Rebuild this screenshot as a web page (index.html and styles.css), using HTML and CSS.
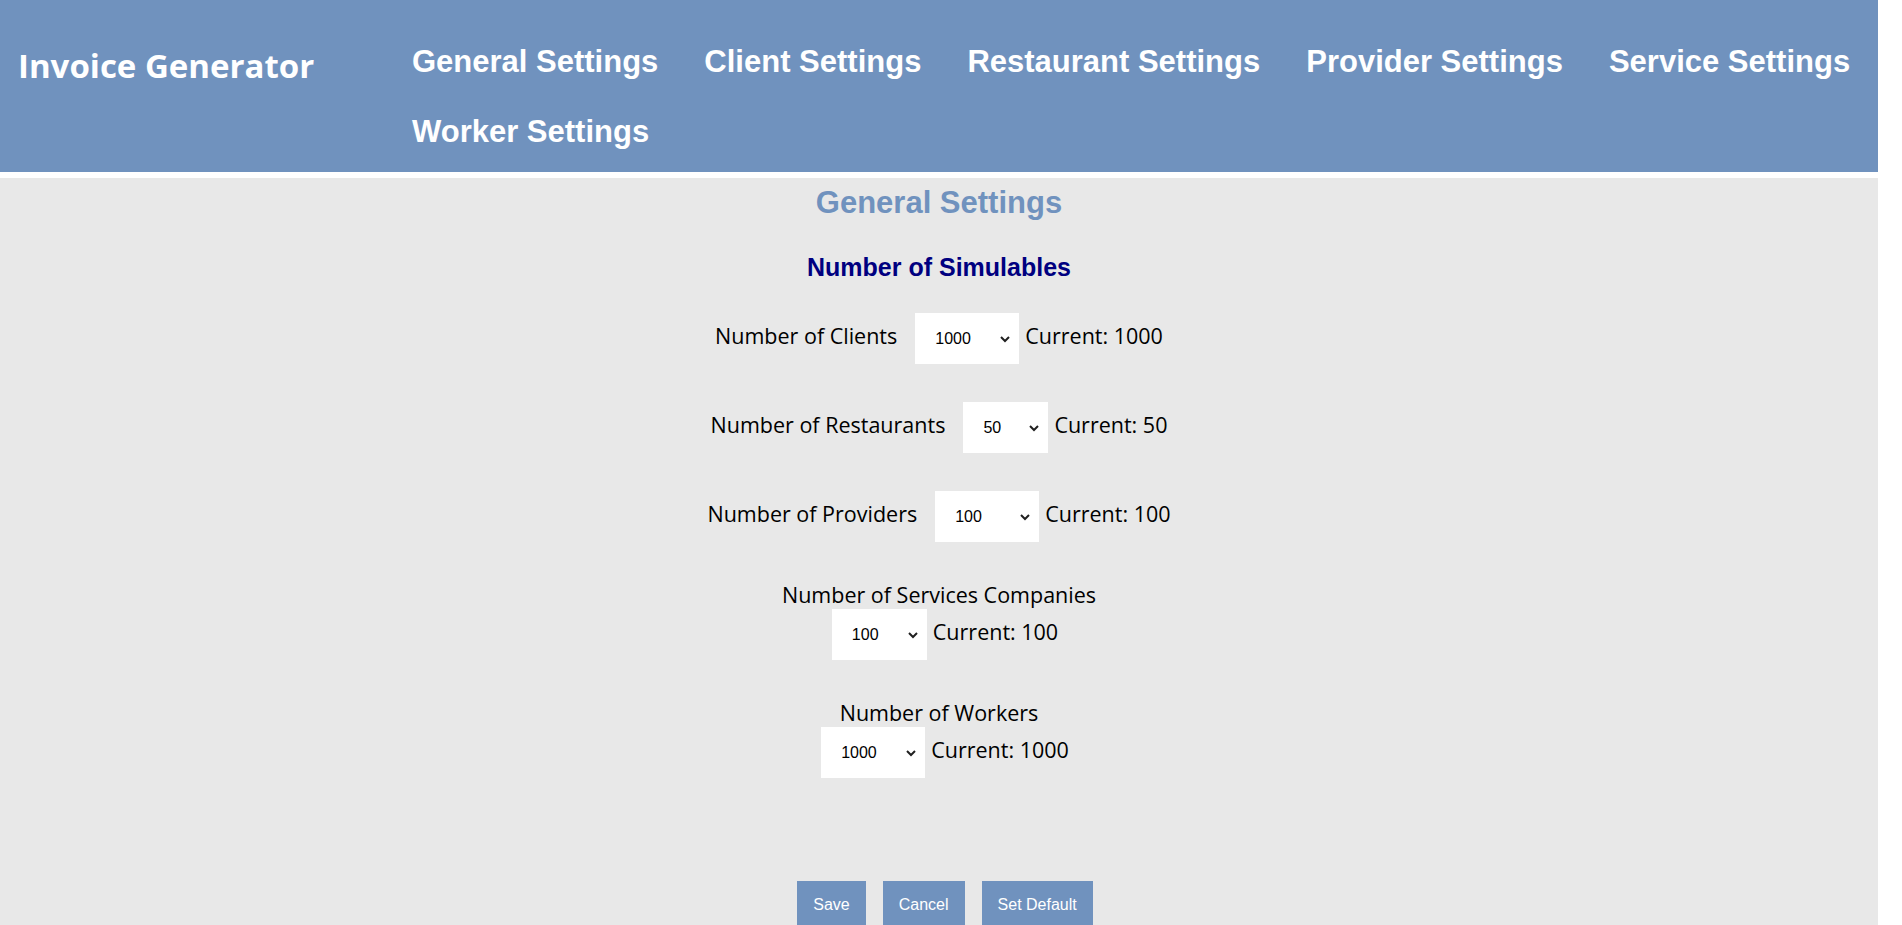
FILE: index.html
```html
<!DOCTYPE html>
<html lang="en">
<head>
<meta charset="utf-8">
<title>Invoice Generator</title>
<link rel="stylesheet" href="styles.css">
</head>
<body>
<header class="topbar">
  <div class="brand">Invoice Generator</div>
  <nav class="nav">
    <a class="nav-link" href="#">General Settings</a>
    <a class="nav-link" href="#">Client Settings</a>
    <a class="nav-link" href="#">Restaurant Settings</a>
    <a class="nav-link" href="#">Provider Settings</a>
    <a class="nav-link" href="#">Service Settings</a>
    <a class="nav-link" href="#">Worker Settings</a>
  </nav>
</header>
<main class="page">
  <h2 class="page-title">General Settings</h2>
  <h3 class="section-title">Number of Simulables</h3>
  <div class="fields">
    <div class="field">
      <label class="field-label" for="clients">Number of Clients</label>
      <span class="select-wrap">
        <select id="clients" class="field-select select-wide">
          <option>100</option><option>500</option><option selected>1000</option><option>5000</option>
        </select>
        <svg class="select-arrow" viewBox="0 0 10 6" aria-hidden="true"><path d="M1 1l4 4 4-4"/></svg>
      </span>
      <span class="field-current">Current: 1000</span>
    </div>
    <div class="field">
      <label class="field-label" for="restaurants">Number of Restaurants</label>
      <span class="select-wrap">
        <select id="restaurants" class="field-select select-narrow">
          <option>10</option><option>20</option><option selected>50</option>
        </select>
        <svg class="select-arrow" viewBox="0 0 10 6" aria-hidden="true"><path d="M1 1l4 4 4-4"/></svg>
      </span>
      <span class="field-current">Current: 50</span>
    </div>
    <div class="field">
      <label class="field-label" for="providers">Number of Providers</label>
      <span class="select-wrap">
        <select id="providers" class="field-select select-wide">
          <option>10</option><option>50</option><option selected>100</option><option>1000</option>
        </select>
        <svg class="select-arrow" viewBox="0 0 10 6" aria-hidden="true"><path d="M1 1l4 4 4-4"/></svg>
      </span>
      <span class="field-current">Current: 100</span>
    </div>
    <div class="field field-stacked">
      <label class="field-label" for="services">Number of Services Companies</label>
      <div class="field-controls">
        <span class="select-wrap">
          <select id="services" class="field-select select-mid">
            <option>10</option><option>50</option><option selected>100</option><option>500</option>
          </select>
          <svg class="select-arrow" viewBox="0 0 10 6" aria-hidden="true"><path d="M1 1l4 4 4-4"/></svg>
        </span>
        <span class="field-current">Current: 100</span>
      </div>
    </div>
    <div class="field field-stacked">
      <label class="field-label" for="workers">Number of Workers</label>
      <div class="field-controls">
        <span class="select-wrap">
          <select id="workers" class="field-select select-wide">
            <option>100</option><option>500</option><option selected>1000</option><option>5000</option>
          </select>
          <svg class="select-arrow" viewBox="0 0 10 6" aria-hidden="true"><path d="M1 1l4 4 4-4"/></svg>
        </span>
        <span class="field-current">Current: 1000</span>
      </div>
    </div>
  </div>
  <div class="actions">
    <button class="btn" type="button">Save</button>
    <button class="btn" type="button">Cancel</button>
    <button class="btn" type="button">Set Default</button>
  </div>
</main>
</body>
</html>
```

FILE: styles.css
```css
* {
  box-sizing: border-box;
}

html,
body {
  margin: 0;
  background: #ffffff;
}

body {
  font-family: "Open Sans", "Noto Sans", sans-serif;
  color: #000000;
}

.topbar {
  width: calc(100% - 24px);
  background: #7092be;
  display: flex;
  align-items: flex-start;
  padding-bottom: 5px;
}

.brand {
  flex: none;
  width: 389px;
  padding: 43px 0 0 18px;
  font-family: "Open Sans", sans-serif;
  font-weight: 700;
  font-size: 33px;
  line-height: normal;
  color: #ffffff;
}

.nav {
  flex: 1;
  display: flex;
  flex-wrap: wrap;
  padding-top: 27px;
  line-height: 70px;
}

.nav-link {
  padding: 0 23px;
  font-family: "Liberation Sans", Arial, sans-serif;
  font-weight: 700;
  font-size: 31px;
  color: #ffffff;
  text-decoration: none;
}

.page {
  width: calc(100% - 24px);
  margin-top: 6px;
  background: #e8e8e8;
  padding: 7px 0 1098px;
  text-align: center;
}

.page-title {
  margin: 0;
  font-family: "Liberation Sans", Arial, sans-serif;
  font-weight: 700;
  font-size: 31px;
  line-height: normal;
  color: #7092be;
}

.section-title {
  margin: 32px 0 0;
  font-family: "Liberation Sans", Arial, sans-serif;
  font-weight: 700;
  font-size: 25px;
  line-height: normal;
  color: #000080;
}

.fields {
  display: flex;
  flex-direction: column;
  align-items: center;
  gap: 38px;
  margin-top: 31px;
}

.field {
  display: flex;
  align-items: baseline;
  justify-content: center;
}

.field-label {
  font-size: 21.5px;
  margin-right: 18px;
}

.select-wrap {
  position: relative;
  display: inline-flex;
  margin-right: 6px;
}

.field-select {
  appearance: none;
  -webkit-appearance: none;
  height: 51px;
  padding: 0 0 0 20px;
  background: #ffffff;
  border: none;
  border-radius: 0;
  font-family: "Liberation Sans", Arial, sans-serif;
  font-size: 16px;
  color: #000000;
}

.select-arrow {
  position: absolute;
  right: 9px;
  top: 23px;
  width: 10px;
  height: 6px;
  overflow: visible;
  fill: none;
  stroke: #202020;
  stroke-width: 2;
  pointer-events: none;
}

.select-wide {
  width: 104px;
}

.select-mid {
  width: 95px;
}

.select-narrow {
  width: 85px;
}

.field-current {
  font-size: 21.5px;
}

.field-stacked {
  flex-direction: column;
  align-items: center;
}

.field-stacked .field-label {
  margin-right: 0;
}

.field-controls {
  display: flex;
  align-items: baseline;
  padding-left: 12px;
}

.actions {
  display: flex;
  justify-content: center;
  gap: 17px;
  padding-left: 12px;
  margin-top: 103px;
}

.btn {
  background: #7092be;
  color: #ffffff;
  border: none;
  border-radius: 0;
  font-family: "Liberation Sans", Arial, sans-serif;
  font-size: 16px;
  line-height: normal;
  padding: 15px 16px;
}
```
